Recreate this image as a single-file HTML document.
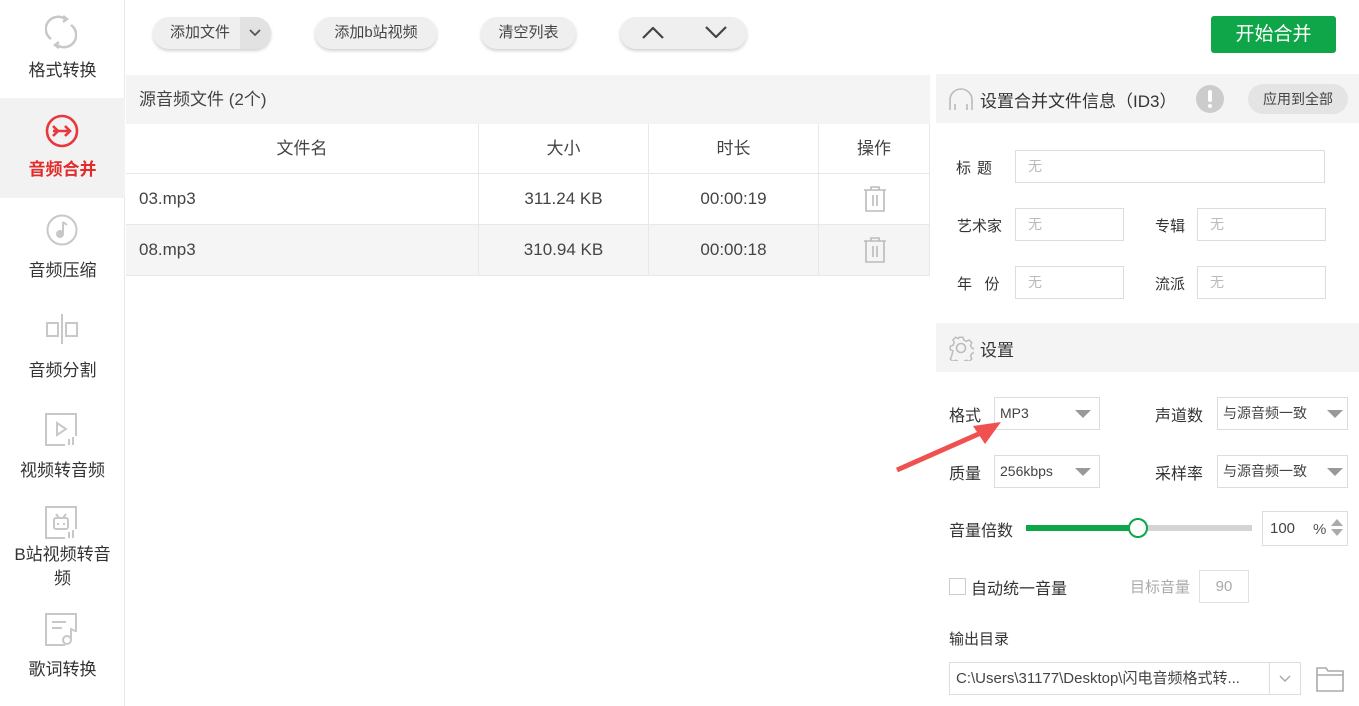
<!DOCTYPE html>
<html><head><meta charset="utf-8"><style>
*{box-sizing:border-box;margin:0;padding:0}
body{width:1359px;height:706px;position:relative;background:#fff;font-family:"Liberation Sans","Noto Sans CJK SC",sans-serif;color:#333;overflow:hidden}
.a{position:absolute}
.side{left:0;top:0;width:125px;height:706px;border-right:1px solid #e8e8e8}
.it{position:absolute;left:0;width:125px;text-align:center;font-size:17px;color:#333}
.btn{position:absolute;top:17px;height:32px;border-radius:16px;background:#efefef;box-shadow:0 2px 3px rgba(0,0,0,.18);font-size:15px;color:#444;text-align:center;line-height:32px}
.bar{background:#f4f4f4}
.cell{position:absolute;border-right:1px solid #e8e8e8;border-bottom:1px solid #e8e8e8;text-align:center;font-size:17px;color:#444;height:51px;line-height:50px}
.lbl{position:absolute;font-size:15px;color:#333}
.inp{position:absolute;border:1px solid #ddd;height:33px;font-size:14px;color:#bbb;padding-left:12px;line-height:31px}
.sel{position:absolute;border:1px solid #ddd;height:33px;font-size:14px;color:#444;padding-left:5px;line-height:31px}
.tri{position:absolute;right:8px;top:12px;width:0;height:0;border-left:8px solid transparent;border-right:8px solid transparent;border-top:8px solid #999}
</style></head><body>
<div class="a side">
 <div class="it" style="top:0;height:98px">
  <svg class="a" style="left:45px;top:15px" width="32" height="34" viewBox="0 0 32 34" fill="none" stroke="#c8c8c8" stroke-width="2.5"><path d="M6 24A12 12 0 0 1 20 4"/><path d="M26 10A12 12 0 0 1 12 30"/><path d="M18 1l4 3-4 3" /><path d="M14 27l-4 3 4 3"/></svg>
  <div class="a" style="left:0;width:125px;top:56px">格式转换</div></div>
 <div class="it" style="top:98px;height:100px;background:#f2f2f2">
  <svg class="a" style="left:45px;top:16px" width="34" height="34" viewBox="0 0 34 34" fill="none" stroke="#e8383d" stroke-width="2.6"><circle cx="17" cy="17" r="15"/><path d="M8 12l5 5-5 5M8 17h17M20 12l5 5-5 5"/></svg>
  <div class="a" style="left:0;width:125px;top:57px;color:#e32b2b;font-weight:bold">音频合并</div></div>
 <div class="it" style="top:198px;height:100px">
  <svg class="a" style="left:46px;top:16px" width="32" height="32" viewBox="0 0 32 32" fill="none" stroke="#c8c8c8" stroke-width="2"><circle cx="16" cy="16" r="14.5"/><path d="M17 8v12" /><circle cx="14" cy="20" r="3" fill="#c8c8c8"/><path d="M17 8l4 3"/></svg>
  <div class="a" style="left:0;width:125px;top:58px">音频压缩</div></div>
 <div class="it" style="top:298px;height:100px">
  <svg class="a" style="left:46px;top:14px" width="32" height="34" viewBox="0 0 32 34" fill="none" stroke="#c8c8c8" stroke-width="2"><rect x="1" y="11" width="11" height="13"/><rect x="20" y="11" width="11" height="13"/><path d="M16 2v30"/></svg>
  <div class="a" style="left:0;width:125px;top:58px">音频分割</div></div>
 <div class="it" style="top:398px;height:100px">
  <svg class="a" style="left:45px;top:15px" width="34" height="34" viewBox="0 0 34 34" fill="none" stroke="#c8c8c8" stroke-width="2"><path d="M20 32H1V1h30v22"/><path d="M12 10l9 6-9 6z"/><path d="M24 26v6M28 24v8"/></svg>
  <div class="a" style="left:0;width:125px;top:58px">视频转音频</div></div>
 <div class="it" style="top:498px;height:110px">
  <svg class="a" style="left:45px;top:8px" width="34" height="34" viewBox="0 0 34 34" fill="none" stroke="#c8c8c8" stroke-width="2"><path d="M20 32H1V1h30v22"/><rect x="9" y="12" width="14" height="11" rx="2"/><path d="M11 8l3 4M21 8l-3 4M13 17v2M19 17v2M24 26v6M28 24v8"/></svg>
  <div class="a" style="left:0;width:125px;top:45px;line-height:24px">B站视频转音<br>频</div></div>
 <div class="it" style="top:608px;height:98px">
  <svg class="a" style="left:45px;top:5px" width="34" height="34" viewBox="0 0 34 34" fill="none" stroke="#c8c8c8" stroke-width="2"><path d="M20 32H1V1h30v18"/><path d="M7 9h14M7 15h10"/><circle cx="22" cy="27" r="4"/><path d="M26 27V16l4 2"/></svg>
  <div class="a" style="left:0;width:125px;top:47px">歌词转换</div></div>
</div>

<div class="btn" style="left:153px;width:118px;text-align:left;padding-left:17px">添加文件<div class="a" style="left:87px;top:0;width:31px;height:32px;background:#e2e2e2;border-radius:0 16px 16px 0"><svg class="a" style="left:9px;top:12px" width="12" height="8" viewBox="0 0 12 8" fill="none" stroke="#555" stroke-width="1.8"><path d="M1 1l5 5 5-5"/></svg></div></div>
<div class="btn" style="left:315px;width:122px">添加b站视频</div>
<div class="btn" style="left:481px;width:95px">清空列表</div>
<div class="btn" style="left:620px;width:127px"><svg class="a" style="left:22px;top:10px" width="22" height="12" viewBox="0 0 22 12" fill="none" stroke="#444" stroke-width="2.2"><path d="M1 11L11 1l10 10"/></svg><svg class="a" style="left:85px;top:9px" width="22" height="12" viewBox="0 0 22 12" fill="none" stroke="#444" stroke-width="2.2"><path d="M1 1l10 10L21 1"/></svg></div>
<div class="a" style="left:1211px;top:16px;width:125px;height:37px;background:#0ea648;border-radius:3px;color:#fff;font-size:19px;text-align:center;line-height:37px">开始合并</div>

<div class="a bar" style="left:126px;top:75px;width:804px;height:49px;font-size:17px;color:#444;padding-left:13px;line-height:49px">源音频文件 (2个)</div>
<div class="cell" style="left:126px;top:124px;width:353px;height:50px">文件名</div>
<div class="cell" style="left:479px;top:124px;width:170px;height:50px">大小</div>
<div class="cell" style="left:649px;top:124px;width:170px;height:50px">时长</div>
<div class="cell" style="left:819px;top:124px;width:111px;height:50px">操作</div>
<div class="cell" style="left:126px;top:174px;width:353px;text-align:left;padding-left:13px">03.mp3</div>
<div class="cell" style="left:479px;top:174px;width:170px">311.24 KB</div>
<div class="cell" style="left:649px;top:174px;width:170px">00:00:19</div>
<div class="cell" style="left:819px;top:174px;width:111px"></div>
<div class="cell" style="left:126px;top:225px;width:353px;text-align:left;padding-left:13px;background:#f5f5f5">08.mp3</div>
<div class="cell" style="left:479px;top:225px;width:170px;background:#f5f5f5">310.94 KB</div>
<div class="cell" style="left:649px;top:225px;width:170px;background:#f5f5f5">00:00:18</div>
<div class="cell" style="left:819px;top:225px;width:111px;background:#f5f5f5"></div>
<svg class="a" style="left:863px;top:186px" width="24" height="26" viewBox="0 0 24 26" fill="none" stroke="#bbb" stroke-width="1.6"><path d="M1 4h22M8 4V1h8v3M3 4v21h18V4M10 9v11M14 9v11"/></svg>
<svg class="a" style="left:863px;top:237px" width="24" height="26" viewBox="0 0 24 26" fill="none" stroke="#bbb" stroke-width="1.6"><path d="M1 4h22M8 4V1h8v3M3 4v21h18V4M10 9v11M14 9v11"/></svg>

<div class="a bar" style="left:936px;top:74px;width:423px;height:49px"></div>
<svg class="a" style="left:948px;top:86px" width="26" height="26" viewBox="0 0 26 26" fill="none" stroke="#bbb" stroke-width="1.6"><path d="M2 24V14A11 11 0 0 1 24 14v10"/><path d="M7 18v6M19 18v6"/></svg>
<div class="lbl" style="left:980px;top:87px;font-size:17px">设置合并文件信息（ID3）</div>
<div class="a" style="left:1196px;top:85px;width:28px;height:28px;border-radius:50%;background:#ccc"><div class="a" style="left:12px;top:5px;width:4px;height:12px;background:#fff;border-radius:2px"></div><div class="a" style="left:12px;top:19px;width:4px;height:4px;background:#fff;border-radius:2px"></div></div>
<div class="a" style="left:1248px;top:84px;width:100px;height:30px;border-radius:15px;background:#e4e4e4;font-size:14px;color:#444;text-align:center;line-height:30px">应用到全部</div>

<div class="lbl" style="left:956px;top:157px;letter-spacing:6px">标题</div>
<div class="inp" style="left:1015px;top:150px;width:310px">无</div>
<div class="lbl" style="left:957px;top:215px">艺术家</div>
<div class="inp" style="left:1015px;top:208px;width:109px">无</div>
<div class="lbl" style="left:1155px;top:215px">专辑</div>
<div class="inp" style="left:1197px;top:208px;width:129px">无</div>
<div class="lbl" style="left:957px;top:273px">年&nbsp;&nbsp;&nbsp;份</div>
<div class="inp" style="left:1015px;top:266px;width:109px">无</div>
<div class="lbl" style="left:1155px;top:273px">流派</div>
<div class="inp" style="left:1197px;top:266px;width:129px">无</div>

<div class="a bar" style="left:936px;top:323px;width:423px;height:49px"></div>
<svg class="a" style="left:948px;top:335px" width="26" height="26" viewBox="0 0 26 26" fill="none" stroke="#bbb" stroke-width="1.6"><path d="M11 1h4l1 3 3 1.5 3-1.5 3 3-1.5 3 1.5 3 3 1v4l-3 1-1.5 3 1.5 3-3 3-3-1.5-3 1.5-1 3h-4l-1-3-3-1.5-3 1.5-3-3 1.5-3L4 16l-3-1v-4l3-1 1.5-3L4 4l3-3 3 1.5z" transform="scale(.9) translate(1.5 1.5)"/><circle cx="13" cy="13" r="4.5"/></svg>
<div class="lbl" style="left:980px;top:336px;font-size:17px">设置</div>

<div class="lbl" style="left:949px;top:402px;font-size:16px">格式</div>
<div class="sel" style="left:994px;top:397px;width:106px">MP3<div class="tri"></div></div>
<div class="lbl" style="left:1155px;top:402px;font-size:16px">声道数</div>
<div class="sel" style="left:1217px;top:397px;width:131px">与源音频一致<div class="tri" style="right:4px"></div></div>
<div class="lbl" style="left:949px;top:460px;font-size:16px">质量</div>
<div class="sel" style="left:994px;top:455px;width:106px">256kbps<div class="tri"></div></div>
<div class="lbl" style="left:1155px;top:460px;font-size:16px">采样率</div>
<div class="sel" style="left:1217px;top:455px;width:131px">与源音频一致<div class="tri" style="right:4px"></div></div>

<svg class="a" style="left:893px;top:418px" width="110" height="56" viewBox="0 0 110 56"><path d="M4 52L90 14" stroke="#f05050" stroke-width="5"/><path d="M108 4L80 8 92 26z" fill="#f05050"/></svg>

<div class="lbl" style="left:949px;top:517px;font-size:16px">音量倍数</div>
<div class="a" style="left:1026px;top:525px;width:226px;height:6px;background:#d4d4d4"></div>
<div class="a" style="left:1026px;top:525px;width:112px;height:6px;background:#0ea648"></div>
<div class="a" style="left:1128px;top:518px;width:20px;height:20px;border-radius:50%;border:2.5px solid #0ea648;background:#fff"></div>
<div class="sel" style="left:1262px;top:511px;width:86px;height:35px;padding-left:7px;font-size:15px;line-height:33px">100<span class="a" style="left:50px;top:1px;color:#555">%</span><div class="a" style="left:68px;top:7px;border-left:6px solid transparent;border-right:6px solid transparent;border-bottom:7px solid #aaa"></div><div class="a" style="left:68px;top:17px;border-left:6px solid transparent;border-right:6px solid transparent;border-top:7px solid #aaa"></div></div>

<div class="a" style="left:949px;top:578px;width:17px;height:17px;border:1px solid #ccc;background:#fff"></div>
<div class="lbl" style="left:971px;top:575px;font-size:16px">自动统一音量</div>
<div class="lbl" style="left:1130px;top:576px;color:#aaa">目标音量</div>
<div class="a" style="left:1199px;top:570px;width:50px;height:33px;border:1px solid #e2e2e2;color:#aaa;font-size:15px;text-align:center;line-height:31px">90</div>

<div class="lbl" style="left:949px;top:628px">输出目录</div>
<div class="a" style="left:949px;top:662px;width:352px;height:33px;border:1px solid #ddd;font-size:15px;color:#444;padding-left:6px;line-height:31px">C:\Users\31177\Desktop\闪电音频格式转...<div class="a" style="left:319px;top:0;width:1px;height:31px;background:#ddd"></div><svg class="a" style="left:329px;top:12px" width="12" height="8" viewBox="0 0 12 8" fill="none" stroke="#aaa" stroke-width="1.5"><path d="M1 1l5 5 5-5"/></svg></div>
<svg class="a" style="left:1316px;top:665px" width="28" height="27" viewBox="0 0 28 27" fill="none" stroke="#aaa" stroke-width="1.6"><path d="M1 3h9l2 3h15v20H1z"/><path d="M1 10h26"/></svg>
</body></html>
